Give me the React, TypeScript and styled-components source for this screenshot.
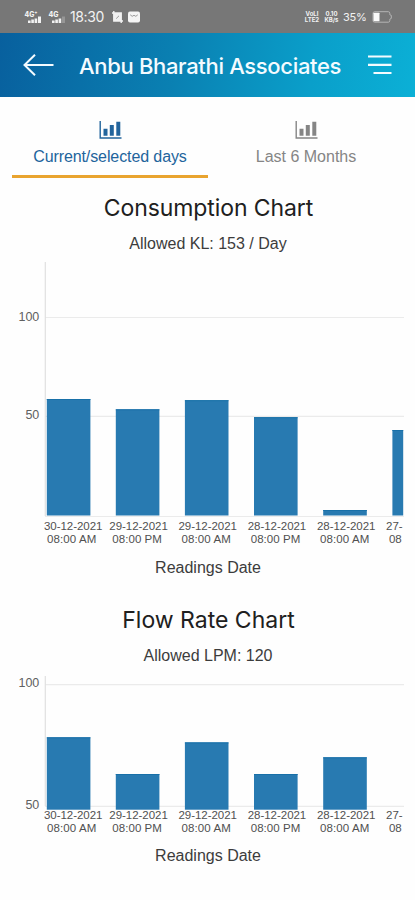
import React from "react";
import styled, { createGlobalStyle } from "styled-components";

const GlobalStyle = createGlobalStyle`
  html, body { margin: 0; padding: 0; background: #fefefe; overflow: hidden; }
  * { box-sizing: border-box; }
`;

const Screen = styled.div`
  width: 415px;
  height: 900px;
  overflow: hidden;
  background: #fefefe;
  font-family: Inter, sans-serif;
`;

const StatusBar = styled.div`
  height: 33px;
  padding: 1px 23px 0 24px;
  display: flex;
  align-items: center;
  justify-content: space-between;
  background: #777777;
  color: #f2f2f2;
`;

const StatusGroup = styled.div<{ $gap: number }>`
  display: flex;
  align-items: center;
  gap: ${(p) => p.$gap}px;
`;

const Clock = styled.span`
  font-size: 14px;
  line-height: 16px;
  width: 34px;
  letter-spacing: -0.4px;
  white-space: nowrap;
  margin-right: 3px;
`;

const BatteryText = styled.span`
  font-size: 11px;
  line-height: 14px;
  width: 25px;
  letter-spacing: -0.2px;
  white-space: nowrap;
`;

const TinyStack = styled.div<{ $width: number }>`
  width: ${(p) => p.$width}px;
  font-size: 6px;
  line-height: 6px;
  font-weight: 700;
  text-align: center;
  white-space: nowrap;
`;

const Header = styled.header`
  height: 64px;
  padding: 0 23px;
  display: flex;
  align-items: center;
  background: linear-gradient(100deg, #08609e 0%, #0a80b2 42%, #0a9fca 75%, #0bb0d6 100%);
`;

const Title = styled.h1`
  margin: 2px 0 0 25px;
  width: 289px;
  font-size: 22px;
  line-height: 28px;
  font-weight: 500;
  letter-spacing: -0.33px;
  white-space: nowrap;
  color: #f4fbff;
`;

const Tabs = styled.nav`
  height: 81px;
  padding: 0 12px;
  display: grid;
  grid-template-columns: 196px 196px;
`;

const Tab = styled.div<{ $active?: boolean }>`
  display: flex;
  flex-direction: column;
  align-items: center;
  padding-top: 24px;
  color: ${(p) => (p.$active ? "#22649c" : "#858585")};
  border-bottom: 3px solid ${(p) => (p.$active ? "#e9a42f" : "transparent")};
`;

const TabLabel = styled.span<{ $spacing: number }>`
  margin-top: 9px;
  font-family: "Liberation Sans", Arial, sans-serif;
  font-size: 16px;
  line-height: 18px;
  letter-spacing: ${(p) => p.$spacing}px;
  white-space: nowrap;
`;

const ChartSection = styled.section<{ $height: number; $top: number }>`
  height: ${(p) => p.$height}px;
  padding-top: ${(p) => p.$top}px;
  display: flex;
  flex-direction: column;
  align-items: center;
`;

const ChartTitle = styled.h2<{ $spacing?: number }>`
  margin: 0;
  padding-left: 2px;
  font-size: 23px;
  line-height: 28px;
  font-weight: 400;
  letter-spacing: ${(p) => p.$spacing ?? 0}px;
  color: #202020;
  white-space: nowrap;
`;

const Caption = styled.p`
  margin: 0;
  padding-left: 1px;
  font-family: "Liberation Sans", Arial, sans-serif;
  font-size: 16px;
  line-height: 18px;
  color: #3c3c3c;
  white-space: nowrap;
`;

const Allowed = styled(Caption)`
  margin: 13px 0 0;
`;

const Spacer = styled.div<{ $size: number }>`
  flex: none;
  height: ${(p) => p.$size}px;
`;

const Plot = styled.svg`
  display: block;
  flex: none;
  font-family: "Liberation Sans", Arial, sans-serif;
`;

const SignalIcon = ({ plus }: { plus?: boolean }) => (
  <svg width={plus ? 19 : 17} height="14" viewBox={`0 0 ${plus ? 19 : 17} 14`} fill="#f2f2f2">
    <text x="0.5" y="6.5" fontSize="7" fontWeight="800" fontFamily="Inter, sans-serif" textLength={plus ? 13 : 10} lengthAdjust="spacingAndGlyphs">
      {plus ? "4G⁺" : "4G"}
    </text>
    <path d="M4 10.5h2.6V13H4zM7.3 9.5h2.6V13H7.3zM10.6 8.5h2.6V13h-2.6z" />
    <path d="M14 6.5h3V13h-3z" opacity={plus ? 1 : 0.25} />
  </svg>
);

const CropIcon = () => (
  <svg width="11" height="12" viewBox="0 0 11 12">
    <rect x="1.8" y="2" width="7.5" height="8" fill="#f2f2f2" />
    <path d="M0 2h9.2v10M1.8 0v10H11" fill="none" stroke="#f2f2f2" strokeWidth="1.4" />
    <path d="M4.2 7.6l2.8-2.8" stroke="#999" />
  </svg>
);

const MailIcon = () => (
  <svg width="12" height="12" viewBox="0 0 12 12">
    <rect y="0.5" width="12" height="11" rx="2" fill="#f5f5f5" />
    <path d="M2.2 3.8l2 1.5 1.8-1 1.8 1 2-1.5" fill="none" stroke="#9b9b9b" />
  </svg>
);

const BatteryIcon = () => (
  <svg width="20" height="12" viewBox="0 0 20 12">
    <path d="M2.5.7h13.8q1.5 0 1.5 1.7v1.3l1.5.7v3l-1.5.8v1.3q0 1.7-1.5 1.7H2.5Q1 11.2 1 9.5V2.4Q1 .7 2.5.7z" fill="none" stroke="#b4b4b4" strokeWidth="1" />
    <rect x="1.5" y="1.7" width="6" height="8.6" rx="0.5" fill="#fafafa" />
  </svg>
);

const BackIcon = () => (
  <svg width="31" height="24" viewBox="0 0 31 24" fill="none" stroke="#f4fbff" strokeWidth="2">
    <path d="M30.5 12H1.5M12 1.8L1.5 12 12 22.3" />
  </svg>
);

const MenuIcon = () => (
  <svg width="24" height="20" viewBox="0 0 24 20" fill="none" stroke="#f4fbff" strokeWidth="2.2">
    <path d="M0 1.5h23.5M0 9.8h23.5M5.5 18h18" />
  </svg>
);

const ChartIcon = () => (
  <svg width="23" height="18" viewBox="0 0 23 18" fill="currentColor">
    <path d="M.5 0h1.4v16.2H22.5v1.5H.5z" />
    <path d="M4.5 7.8h4v7h-4zM10.8 4h4v10.8h-4zM17.3.7h4v14.1h-4z" />
  </svg>
);

type BarItem = { x: number; top: number; w?: number };
type PlotData = {
  height: number;
  axisBottom: number;
  grid: { y: number; label?: string; labelY?: number }[];
  bars: BarItem[];
  barBottom: number;
  labelY: number;
};

const ticks = [
  { x: 73.2, date: "30-12-2021", time: "08:00 AM" },
  { x: 138.6, date: "29-12-2021", time: "08:00 PM" },
  { x: 207.7, date: "29-12-2021", time: "08:00 AM" },
  { x: 277, date: "28-12-2021", time: "08:00 PM" },
  { x: 346.2, date: "28-12-2021", time: "08:00 AM" },
];

const BarPlot = ({ data }: { data: PlotData }) => (
  <Plot width="415" height={data.height} viewBox={`0 0 415 ${data.height}`}>
    {data.grid.map((g) => (
      <g key={g.y}>
        <path d={`M45 ${g.y}H404`} stroke="#ebebeb" strokeWidth="1.2" />
        {g.label && (
          <text x="39.3" y={g.labelY} fontSize="12.5" fill="#606060" textAnchor="end">
            {g.label}
          </text>
        )}
      </g>
    ))}
    <path d={`M45.3 0V${data.axisBottom}`} stroke="#e0e0e0" strokeWidth="1.2" />
    {data.bars.map((b) => (
      <g key={b.x}>
        <rect x={b.x} y={b.top} width={b.w ?? 43.6} height={data.barBottom - b.top} fill="#287ab1" />
        <path d={`M${b.x} ${b.top + 0.5}h${b.w ?? 43.6}`} stroke="#1870a8" />
      </g>
    ))}
    <g fontSize="11.5" fill="#505050" textAnchor="middle">
      {ticks.map((t) => (
        <React.Fragment key={t.x}>
          <text x={t.x} y={data.labelY} textLength="58.5">{t.date}</text>
          <text x={t.x - 1.5} y={data.labelY + 12.6} textLength="49.5">{t.time}</text>
        </React.Fragment>
      ))}
      <text x="394.3" y={data.labelY} textLength="16.5">27-</text>
      <text x="395.3" y={data.labelY + 12.6}>08</text>
    </g>
  </Plot>
);

const consumption: PlotData = {
  height: 297,
  axisBottom: 254,
  grid: [
    { y: 55.5, label: "100", labelY: 58.5 },
    { y: 154.3, label: "50", labelY: 157 },
    { y: 254.5 },
  ],
  bars: [
    { x: 46.8, top: 137 },
    { x: 115.8, top: 147.3 },
    { x: 184.9, top: 138.2 },
    { x: 254, top: 155.2 },
    { x: 323.2, top: 248 },
    { x: 392.4, top: 168, w: 10.8 },
  ],
  barBottom: 253.5,
  labelY: 268,
};

const flowRate: PlotData = {
  height: 171,
  axisBottom: 130,
  grid: [
    { y: 8.7, label: "100", labelY: 11 },
    { y: 130.3, label: "50", labelY: 132.5 },
  ],
  bars: [
    { x: 46.8, top: 61.3 },
    { x: 115.8, top: 98 },
    { x: 184.9, top: 66.4 },
    { x: 254, top: 98 },
    { x: 323.2, top: 81.3 },
  ],
  barBottom: 133.7,
  labelY: 142.9,
};

export default function App() {
  return (
    <>
      <GlobalStyle />
      <Screen>
        <StatusBar>
          <StatusGroup $gap={5}>
            <SignalIcon plus />
            <SignalIcon />
            <Clock>18:30</Clock>
            <CropIcon />
            <MailIcon />
          </StatusGroup>
          <StatusGroup $gap={4}>
            <TinyStack $width={16}>VoLI<br />LTE2</TinyStack>
            <TinyStack $width={15}>0.10<br />KB/s</TinyStack>
            <BatteryText>35%</BatteryText>
            <BatteryIcon />
          </StatusGroup>
        </StatusBar>
        <Header>
          <BackIcon />
          <Title>Anbu Bharathi Associates</Title>
          <MenuIcon />
        </Header>
        <Tabs>
          <Tab $active>
            <ChartIcon />
            <TabLabel $spacing={-0.1}>Current/selected days</TabLabel>
          </Tab>
          <Tab>
            <ChartIcon />
            <TabLabel $spacing={0}>Last 6 Months</TabLabel>
          </Tab>
        </Tabs>
        <ChartSection $height={427} $top={16}>
          <ChartTitle $spacing={-0.1}>Consumption Chart</ChartTitle>
          <Allowed>Allowed KL: 153 / Day</Allowed>
          <Spacer $size={9} />
          <BarPlot data={consumption} />
          <Caption>Readings Date</Caption>
        </ChartSection>
        <ChartSection $height={279} $top={1}>
          <ChartTitle>Flow Rate Chart</ChartTitle>
          <Allowed>Allowed LPM: 120</Allowed>
          <Spacer $size={11} />
          <BarPlot data={flowRate} />
          <Caption>Readings Date</Caption>
        </ChartSection>
        <ChartSection $height={40} $top={11}>
          <ChartTitle>Flow Rate Chart</ChartTitle>
        </ChartSection>
      </Screen>
    </>
  );
}
